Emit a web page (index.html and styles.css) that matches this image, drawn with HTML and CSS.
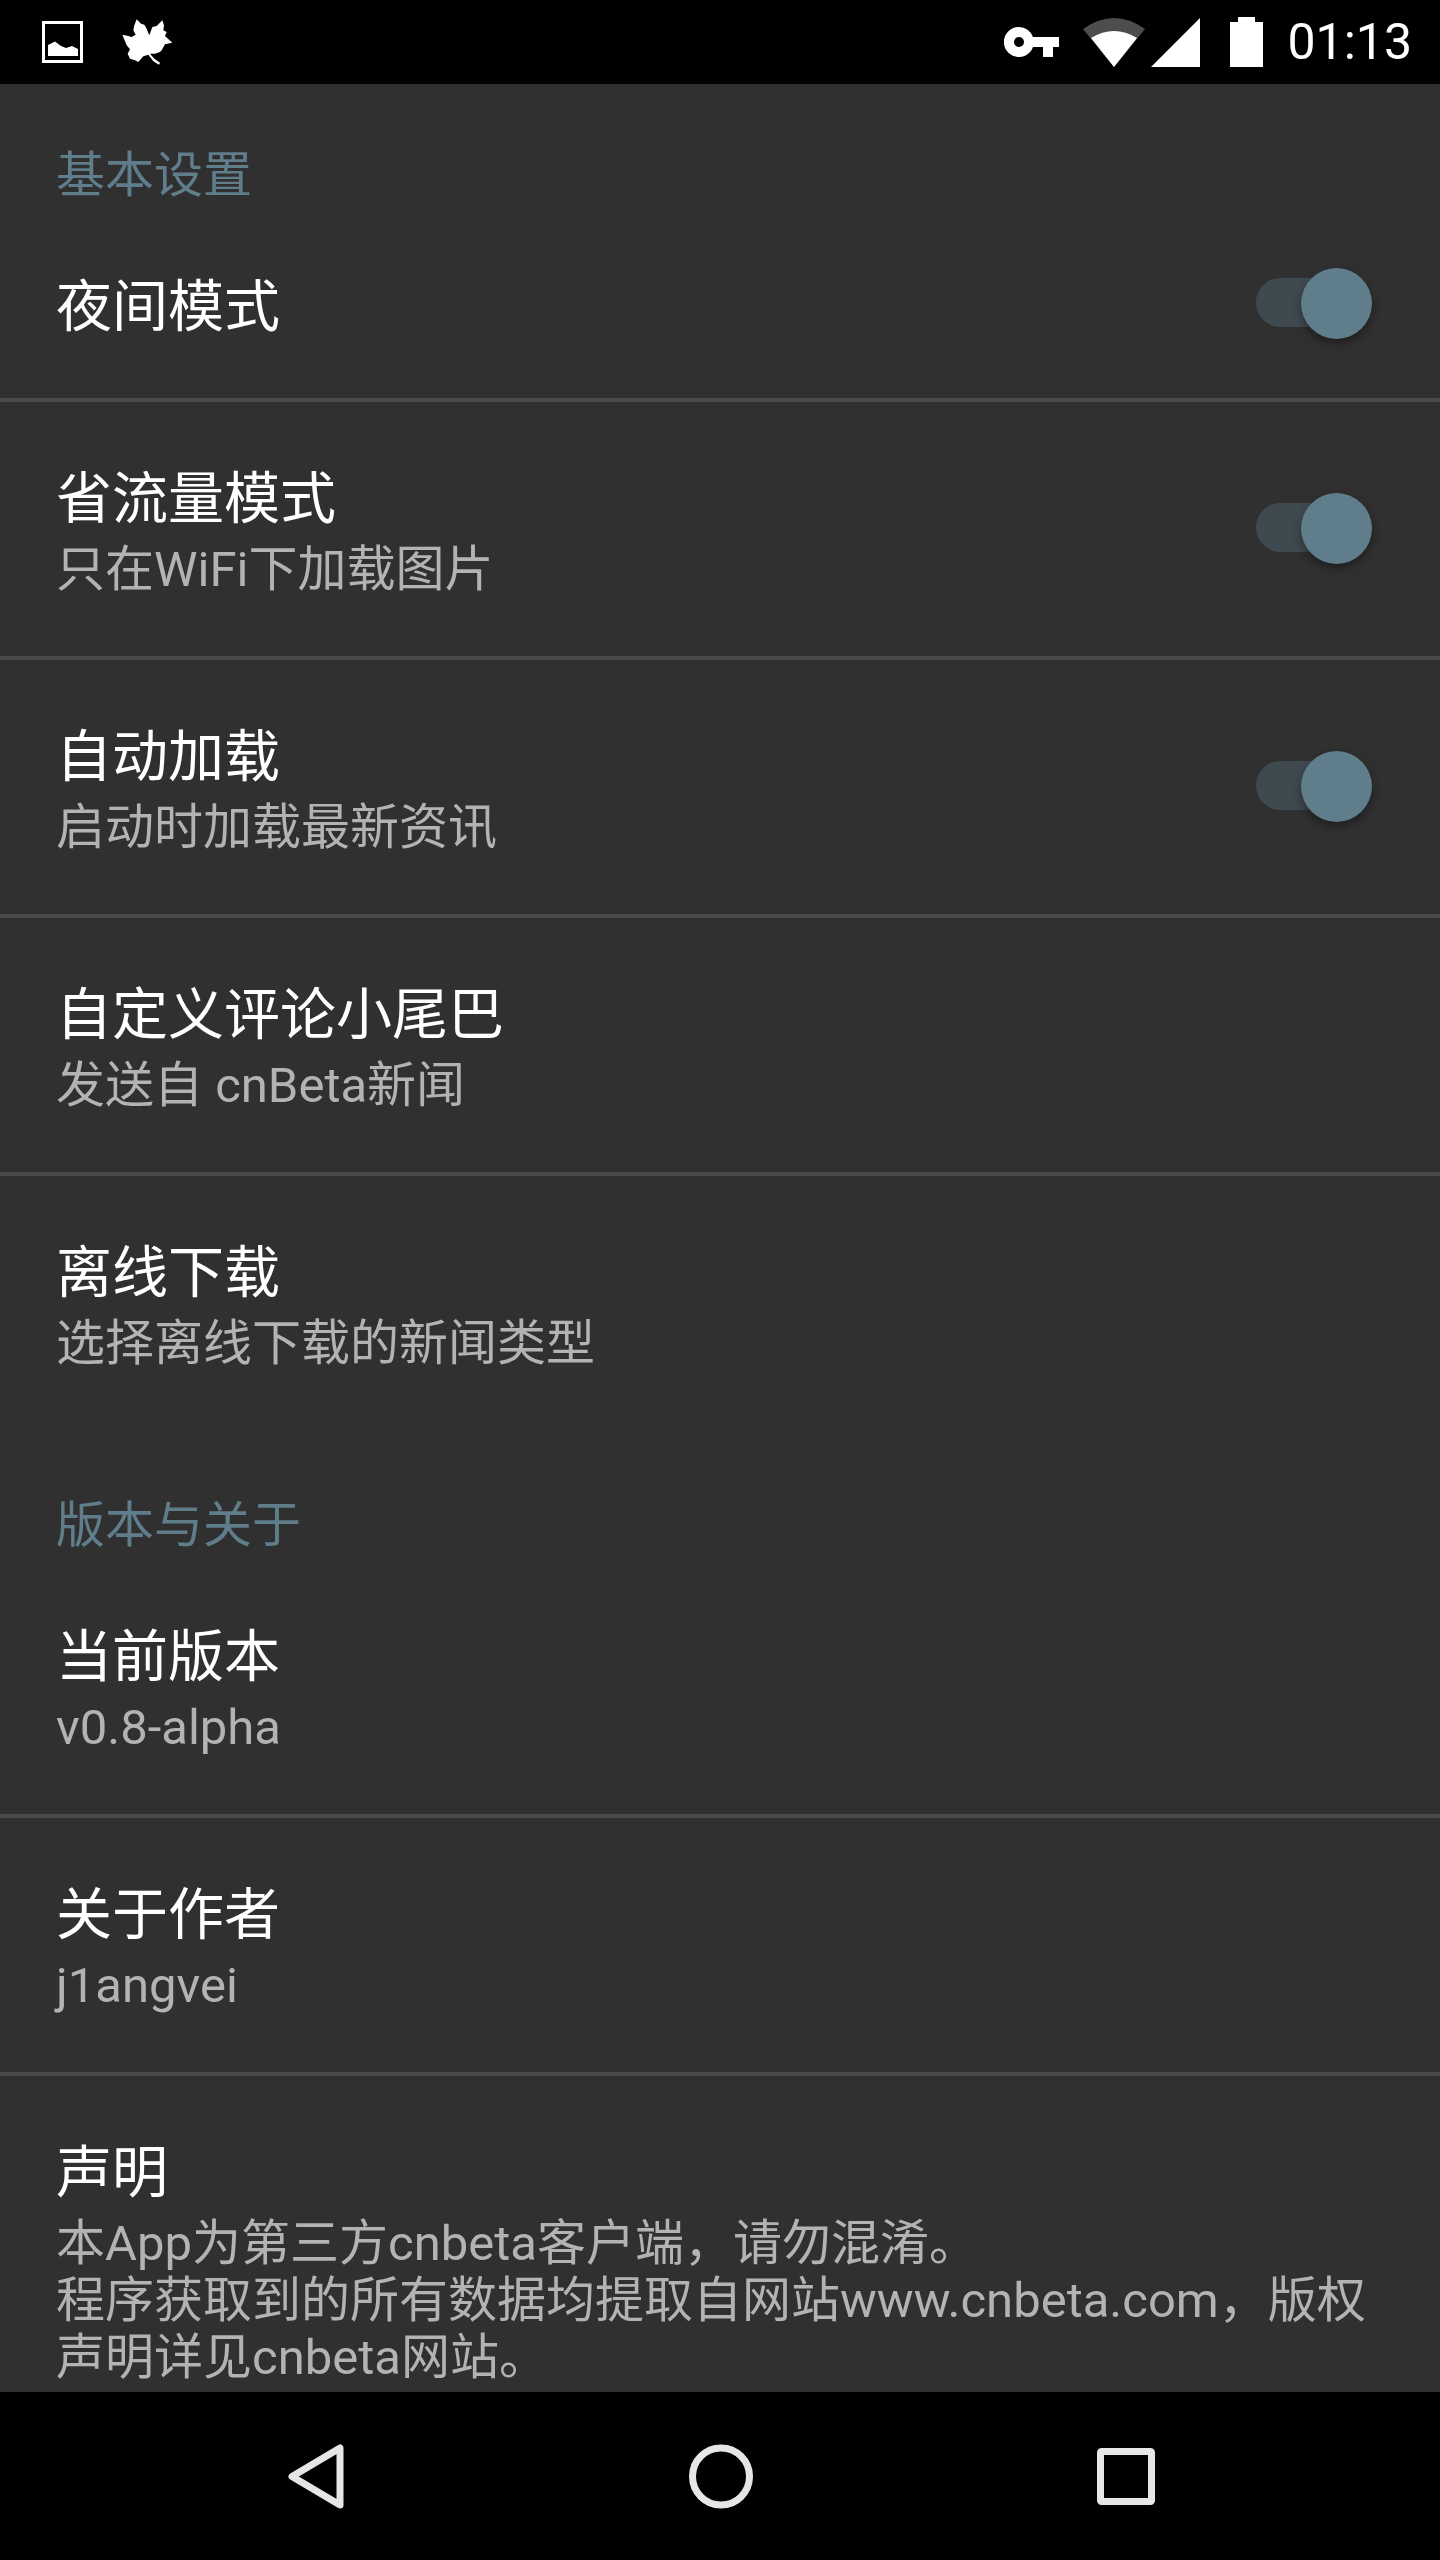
FILE: index.html
```html
<!DOCTYPE html>
<html lang="zh-CN">

<head>
    <meta charset="UTF-8">
    <title>设置</title>
    <link rel="stylesheet" href="styles.css">
</head>

<body>
    <div class="status-bar">
        <div class="status-left">
            <svg class="icon-image" viewBox="0 0 41 42">
                <rect x="1.5" y="1.5" width="38" height="39" fill="none" stroke="#fff" stroke-width="3" />
                <path d="M6 35V24L13 20.5 19 25 24 27 30 25 36 28V35Z" fill="#fff" />
            </svg>
            <svg class="icon-leaf" viewBox="0 0 192 180">
                <path fill="#fff"
                    d="M65 22L78 35 88 38 95 50 103 70 112 45 125 42 142 25 147 40 145 55 155 60 150 72 172 92 150 97 140 115 135 120 120 125 105 125 118 140 135 152 132 158 115 148 100 128 85 133 70 150 60 145 45 140 38 125 45 112 35 100 22 68 40 72 50 75 62 68 55 55 58 40Z" />
            </svg>
        </div>
        <div class="status-right">
            <svg class="icon-key" viewBox="0 0 55 30">
                <path fill="#fff" fill-rule="evenodd"
                    d="M15 0a15 15 0 0 1 14 10h26v10h-6v10H39V20H29A15 15 0 1 1 15 0zm0 10a5 5 0 1 0 0 10 5 5 0 0 0 0-10z" />
            </svg>
            <svg class="icon-wifi" viewBox="0 0 62 49">
                <path fill="#4d4d4d" d="M0 11Q31-11 62 11L31 49Z" />
                <path fill="#fff" d="M8 20Q31 6 54 20L31 49Z" />
            </svg>
            <svg class="icon-signal" viewBox="0 0 49 49">
                <path fill="#fff" d="M0 49L49 0V49Z" />
            </svg>
            <svg class="icon-battery" viewBox="0 0 33 50">
                <path fill="#fff" d="M8 0H25V5H33V50H0V5H8Z" />
            </svg>
            <span class="clock">01:13</span>
        </div>
    </div>

    <div class="prefs">
        <div class="section-title">基本设置</div>
        <div class="row row-single">
            <div class="row-text">
                <div class="title">夜间模式</div>
            </div>
            <div class="switch"><span class="thumb"></span></div>
        </div>
        <div class="row">
            <div class="row-text">
                <div class="title">省流量模式</div>
                <div class="summary">只在WiFi下加载图片</div>
            </div>
            <div class="switch"><span class="thumb"></span></div>
        </div>
        <div class="row">
            <div class="row-text">
                <div class="title">自动加载</div>
                <div class="summary">启动时加载最新资讯</div>
            </div>
            <div class="switch"><span class="thumb"></span></div>
        </div>
        <div class="row">
            <div class="row-text">
                <div class="title">自定义评论小尾巴</div>
                <div class="summary">发送自 cnBeta新闻</div>
            </div>
        </div>
        <div class="row row-last">
            <div class="row-text">
                <div class="title">离线下载</div>
                <div class="summary">选择离线下载的新闻类型</div>
            </div>
        </div>

        <div class="section-title section-next">版本与关于</div>
        <div class="row">
            <div class="row-text">
                <div class="title">当前版本</div>
                <div class="summary">v0.8-alpha</div>
            </div>
        </div>
        <div class="row">
            <div class="row-text">
                <div class="title">关于作者</div>
                <div class="summary">j1angvei</div>
            </div>
        </div>
        <div class="row row-last">
            <div class="row-text">
                <div class="title">声明</div>
                <div class="summary">本App为第三方cnbeta客户端，请勿混淆。<br>程序获取到的所有数据均提取自网站www.cnbeta.com，版权声明详见cnbeta网站。</div>
            </div>
        </div>
    </div>

    <div class="nav-bar">
        <svg class="icon-back" viewBox="0 0 56 65">
            <path d="M52 4V61L4 32.5Z" fill="none" stroke="#e6e6e6" stroke-width="7" stroke-linejoin="round" />
        </svg>
        <svg class="icon-home" viewBox="0 0 64 65">
            <circle cx="32" cy="32.5" r="28.5" fill="none" stroke="#e6e6e6" stroke-width="7" />
        </svg>
        <svg class="icon-recent" viewBox="0 0 58 57">
            <rect x="3.5" y="3.5" width="51" height="50" rx="1" fill="none" stroke="#e6e6e6" stroke-width="7" />
        </svg>
    </div>
</body>

</html>
```

FILE: styles.css
```css
html,
body {
    margin: 0;
    padding: 0;
}

body {
    display: flex;
    flex-direction: column;
    width: 1440px;
    height: 2560px;
    overflow: hidden;
    background-color: #303030;
    font-family: Roboto, "Noto Sans CJK SC", sans-serif;
}

svg {
    display: block;
    flex: none;
}

.status-bar {
    flex: none;
    display: flex;
    align-items: center;
    justify-content: space-between;
    height: 84px;
    padding: 0 28px 0 42px;
    background-color: #000;
}

.status-left {
    display: flex;
    align-items: center;
    gap: 32px;
}

.status-right {
    display: flex;
    align-items: center;
}

.icon-image {
    width: 41px;
    height: 42px;
}

.icon-leaf {
    width: 64px;
    height: 60px;
}

.icon-key {
    width: 55px;
    height: 30px;
}

.icon-wifi {
    width: 62px;
    height: 49px;
    margin-left: 24px;
}

.icon-signal {
    width: 49px;
    height: 49px;
    margin-left: 6px;
}

.icon-battery {
    width: 33px;
    height: 50px;
    margin-left: 30px;
}

.clock {
    margin-left: 24px;
    color: #fff;
    font-size: 50px;
    line-height: 84px;
}

.prefs {
    flex: 1;
    min-height: 0;
    overflow: hidden;
}

.section-title {
    height: 121px;
    padding: 63px 56px 0;
    box-sizing: border-box;
    color: #607d8b;
    font-size: 49px;
    line-height: 57px;
}

.section-next {
    height: 126px;
}

.row {
    display: flex;
    align-items: center;
    justify-content: space-between;
    padding: 55px 72px 58px 56px;
    border-bottom: 4px solid #4a4a4a;
}

.row-single {
    padding-top: 50px;
    padding-bottom: 49px;
}

.row-single .title {
    padding-top: 10px;
}

.row-last {
    border-bottom-color: transparent;
}

.row-text {
    flex: 1;
    min-width: 0;
}

.title {
    color: #fff;
    font-size: 56px;
    line-height: 84px;
}

.summary {
    color: #b3b3b3;
    font-size: 49px;
    line-height: 57px;
}

.switch {
    position: relative;
    flex: none;
    width: 112px;
    height: 49px;
    border-radius: 25px;
    background-color: #3f4a50;
}

.thumb {
    position: absolute;
    top: -10px;
    right: -4px;
    width: 71px;
    height: 71px;
    border-radius: 50%;
    background-color: #607d8b;
    box-shadow: 0 4px 10px rgba(0, 0, 0, 0.4);
}

.nav-bar {
    flex: none;
    position: relative;
    display: flex;
    align-items: center;
    height: 168px;
    padding-left: 288px;
    background-color: #000;
}

.icon-back {
    width: 56px;
    height: 65px;
}

.icon-home {
    width: 64px;
    height: 65px;
    margin-left: 345px;
}

.icon-recent {
    width: 58px;
    height: 57px;
    margin-left: 344px;
}
```
